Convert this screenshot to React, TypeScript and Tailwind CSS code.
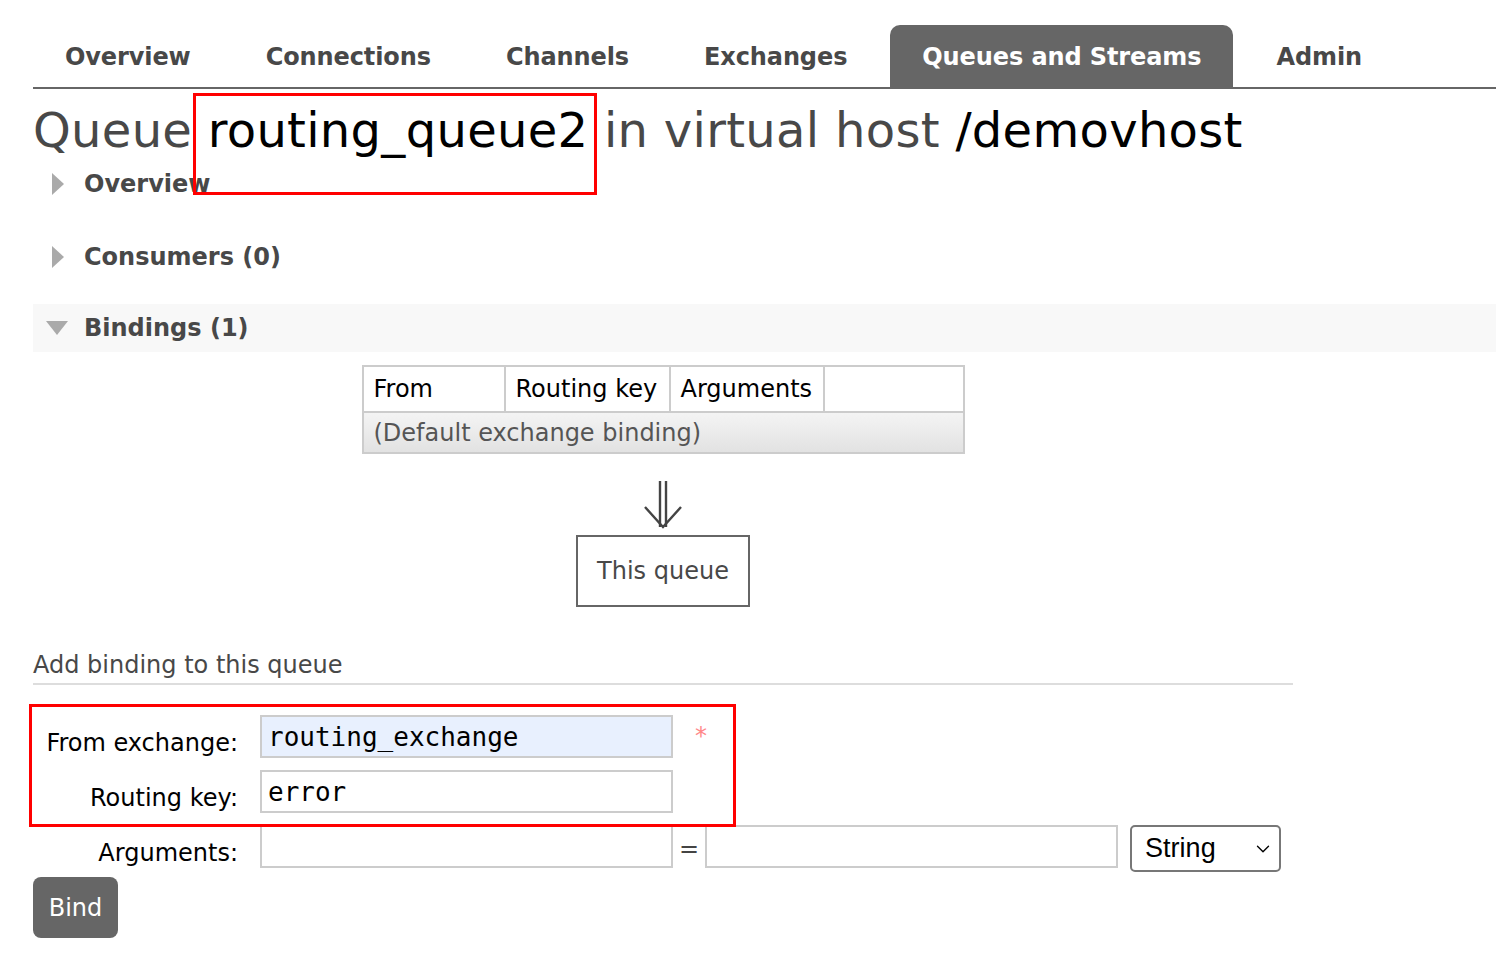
import { ChevronDown } from "lucide-react"

const tabs = ["Overview", "Connections", "Channels", "Exchanges", "Queues and Streams", "Admin"]

function SectionHeader({ label, open, shaded }: { label: string; open?: boolean; shaded?: boolean }) {
  return (
    <div className={`flex h-[48px] items-center ${shaded ? "bg-[#f8f8f8]" : ""}`}>
      <div className="flex w-[51px] justify-center">
        {open ? (
          <svg width="22" height="14" viewBox="0 0 22 14" className="ml-[-4px]">
            <polygon points="0,0 22,0 11,14" fill="#aaa" />
          </svg>
        ) : (
          <svg width="12" height="22" viewBox="0 0 12 22" className="ml-[-2px]">
            <polygon points="0,0 12,11 0,22" fill="#aaa" />
          </svg>
        )}
      </div>
      <span className="text-[24px] font-bold text-[#484848]">{label}</span>
    </div>
  )
}

const labelCls = "mt-[13px] w-[205px] text-right text-[24px] leading-[30px] text-black"
const inputCls = "ml-[22px] h-[43px] w-[413px] border-2 border-[#ccc] px-[6px] font-['DejaVu_Sans_Mono',monospace] text-[26px] text-black outline-none"

export default function App() {
  return (
    <div className="relative min-h-[958px] bg-white pl-[33px] font-['DejaVu_Sans',Verdana,sans-serif] text-[#484848]">
      {/* tabs */}
      <div className="flex h-[89px] items-end gap-[11px] border-b-2 border-[#666] pt-[25px]">
        {tabs.map((t) => (
          <div
            key={t}
            className={`flex h-[62px] items-center rounded-t-[10px] px-[32px] pt-[2px] text-[24px] font-bold tracking-[-0.1px] ${
              t === "Queues and Streams" ? "bg-[#666] text-white" : "text-[#484848]"
            }`}
          >
            {t}
          </div>
        ))}
      </div>

      {/* title */}
      <h1 className="mt-[13px] text-[48px] leading-[56px] tracking-[0.3px] text-[#484848]">
        Queue <span className="text-black">routing_queue2</span> in virtual host{" "}
        <span className="text-black">/demovhost</span>
      </h1>

      <div className="mt-[2px]">
        <SectionHeader label="Overview" />
      </div>
      <div className="mt-[25px]">
        <SectionHeader label="Consumers (0)" />
      </div>
      <div className="mt-[23px]">
        <SectionHeader label="Bindings (1)" open shaded />
      </div>

      <div className="w-[1260px]">
        <div className="mt-[13px] flex flex-col items-center">
          <table className="w-[603px] border-collapse text-[24px] text-black">
            <thead>
              <tr className="h-[46px]">
                <th className="w-[142px] border-2 border-[#ccc] px-[10px] text-left font-normal">From</th>
                <th className="w-[165px] border-2 border-[#ccc] px-[10px] text-left font-normal">Routing key</th>
                <th className="w-[154px] border-2 border-[#ccc] px-[10px] text-left font-normal">Arguments</th>
                <th className="border-2 border-[#ccc]"></th>
              </tr>
            </thead>
            <tbody>
              <tr className="h-[41px]">
                <td
                  colSpan={4}
                  className="border-2 border-[#ccc] bg-gradient-to-b from-[#f4f4f4] to-[#e2e2e2] px-[10px] text-[#555]"
                >
                  (Default exchange binding)
                </td>
              </tr>
            </tbody>
          </table>

          <svg width="40" height="48" viewBox="0 0 40 48" className="mt-[27px]">
            <line x1="17" y1="0" x2="17" y2="46" stroke="#444" strokeWidth="2.4" />
            <line x1="23" y1="0" x2="23" y2="46" stroke="#444" strokeWidth="2.4" />
            <polyline points="2,26 20,46 38,26" fill="none" stroke="#444" strokeWidth="2.4" />
          </svg>

          <div className="mt-[6px] flex h-[72px] w-[174px] items-center justify-center border-2 border-[#666] text-[24px] text-[#484848]">
            This queue
          </div>
        </div>

        {/* add binding */}
        <div className="mt-[40px] border-b-2 border-[#ddd] text-[24px] leading-[36px] text-[#484848]">
          Add binding to this queue
        </div>

        <div className="mt-[30px] flex flex-col gap-[12px]">
          <div className="flex items-start">
            <label className={labelCls}>From exchange:</label>
            <input readOnly value="routing_exchange" className={`${inputCls} bg-[#e8f0fe]`} />
            <span className="ml-[22px] mt-[3px] text-[24px] leading-[36px] text-[#f88]">*</span>
          </div>
          <div className="flex items-start">
            <label className={labelCls}>Routing key:</label>
            <input readOnly value="error" className={`${inputCls} bg-white`} />
          </div>
          <div className="flex items-start">
            <label className={labelCls}>Arguments:</label>
            <input readOnly value="" className={`${inputCls} bg-white`} />
            <span className="mx-[6px] mt-[6px] text-[24px] text-[#444]">=</span>
            <input
              readOnly
              value=""
              className="h-[43px] w-[413px] border-2 border-[#ccc] bg-white outline-none"
            />
            <div className="ml-[12px] flex h-[47px] w-[151px] items-center justify-between rounded-[5px] border-2 border-[#777] pl-[13px] pr-[5px] font-['Liberation_Sans',Arial,sans-serif] text-[27px] text-black">
              String
              <ChevronDown size={22} strokeWidth={1.5} />
            </div>
          </div>
        </div>

        <button className="mt-[5px] flex h-[61px] w-[85px] items-center justify-center rounded-[8px] bg-[#666] text-[24px] text-white">
          Bind
        </button>
      </div>

      {/* annotation boxes */}
      <div className="pointer-events-none absolute left-[193px] top-[93px] h-[102px] w-[404px] border-[3px] border-[#f00]" />
      <div className="pointer-events-none absolute left-[29px] top-[704px] h-[123px] w-[707px] border-[3px] border-[#f00]" />
    </div>
  )
}
